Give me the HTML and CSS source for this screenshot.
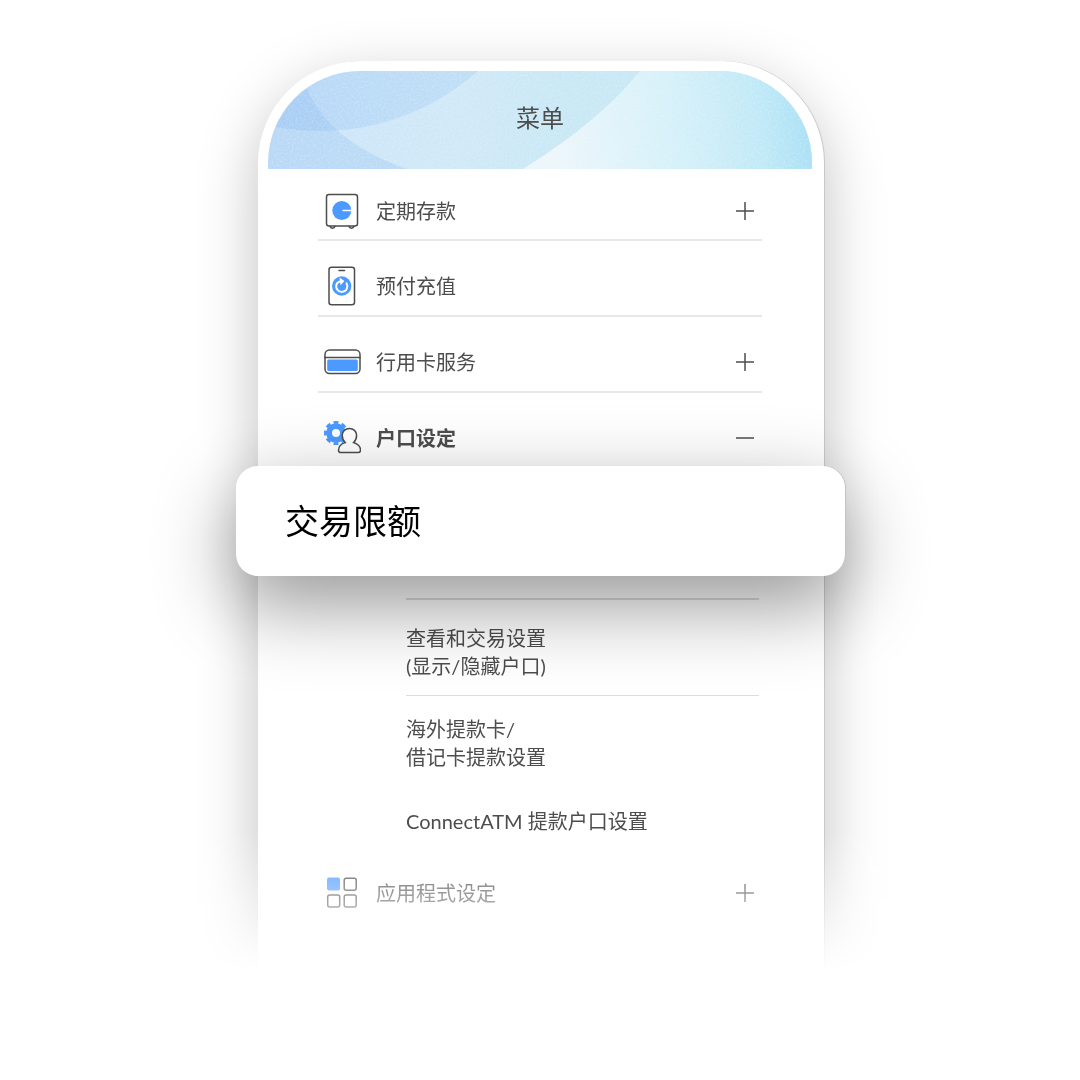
FILE: index.html
```html
<!DOCTYPE html>
<html lang="zh-CN">
<head>
    <meta charset="UTF-8">
    <meta name="viewport" content="width=device-width, initial-scale=1.0">
    <title>菜单</title>
    <link rel="stylesheet" href="styles.css">
</head>
<body>
    <main class="stage">
        <div class="phone">
            <header class="phone-header">
                <svg class="header-art" viewBox="0 0 544 98" preserveAspectRatio="none" aria-hidden="true">
                    <defs>
                        <linearGradient id="base" x1="0" y1="0" x2="1" y2="0">
                            <stop offset="0" stop-color="#cbe4f8"/>
                            <stop offset="0.35" stop-color="#d0e9f8"/>
                            <stop offset="0.55" stop-color="#c8e8f5"/>
                            <stop offset="1" stop-color="#c8e8f5"/>
                        </linearGradient>
                        <linearGradient id="right" gradientUnits="userSpaceOnUse" x1="290" y1="90" x2="544" y2="70">
                            <stop offset="0" stop-color="#ecf6fb"/>
                            <stop offset="0.5" stop-color="#d3f0f9"/>
                            <stop offset="0.8" stop-color="#c0e9f7"/>
                            <stop offset="1" stop-color="#a9e0f5"/>
                        </linearGradient>
                        <linearGradient id="top" x1="0" y1="0" x2="1" y2="0">
                            <stop offset="0.3" stop-color="#6fa8f0" stop-opacity="0.24"/>
                            <stop offset="1" stop-color="#6fb0f0" stop-opacity="0.16"/>
                        </linearGradient>
                        <filter id="grain" x="0" y="0" width="100%" height="100%">
                            <feTurbulence type="fractalNoise" baseFrequency="0.5" numOctaves="2"/>
                            <feColorMatrix type="matrix" values="0 0 0 0 1  0 0 0 0 1  0 0 0 0 1  1.6 0 0 0 -0.6"/>
                        </filter>
                    </defs>
                    <rect width="544" height="98" fill="url(#base)"/>
                    <path d="M0 0H34Q48 66 139 98H0Z" fill="#6fa8f0" fill-opacity="0.2"/>
                    <circle cx="52" cy="-178" r="238" fill="url(#top)"/>
                    <path d="M372 0Q332 50 255 98H544V0Z" fill="url(#right)"/>
                    <rect width="544" height="98" filter="url(#grain)" opacity="0.3"/>
                </svg>
                <h1 class="title">菜单</h1>
            </header>

            <nav class="menu">
                <button type="button" class="row first" aria-expanded="false">
                    <svg class="icon" viewBox="0 0 38 40" aria-hidden="true">
                        <path class="line" d="M7 35.3a2.6 2.6 0 0 0 5 0M26 35.3a2.6 2.6 0 0 0 5 0"/>
                        <rect class="line" x="3.5" y="3.5" width="31" height="31.5" rx="2.5"/>
                        <circle class="fill" cx="18.8" cy="19.5" r="9.5"/>
                        <path class="cut" d="M19.5 19.5H29"/>
                    </svg>
                    <span class="label">定期存款</span>
                    <svg class="toggle" viewBox="0 0 18 18" aria-hidden="true"><path d="M0 9H18M9 0V18"/></svg>
                </button>

                <button type="button" class="row">
                    <svg class="icon" viewBox="0 0 38 40" aria-hidden="true">
                        <rect class="line" x="6" y="1.2" width="25.5" height="37.6" rx="2.5"/>
                        <path class="line" d="M16 4.5H21.5"/>
                        <circle class="fill" cx="18.7" cy="20" r="9.7"/>
                        <path class="cut wide" d="M23.6 17.4A5.6 5.6 0 1 1 13.6 18.2Q14.6 15.6 18 15.2"/>
                        <path class="white" d="M16.4 11.4L21.4 14.9L17.6 19.2Z"/>
                    </svg>
                    <span class="label">预付充值</span>
                </button>

                <button type="button" class="row" aria-expanded="false">
                    <svg class="icon" viewBox="0 0 38 40" aria-hidden="true">
                        <rect class="line" x="2" y="8" width="35" height="23.5" rx="4.5"/>
                        <path class="line" d="M2 15.5H37"/>
                        <rect class="fill" x="4.2" y="17.6" width="30.6" height="11.4" rx="1.5"/>
                    </svg>
                    <span class="label">行用卡服务</span>
                    <svg class="toggle" viewBox="0 0 18 18" aria-hidden="true"><path d="M0 9H18M9 0V18"/></svg>
                </button>

                <button type="button" class="row open" aria-expanded="true">
                    <svg class="icon" viewBox="0 0 38 40" aria-hidden="true">
                        <circle class="gear-body" cx="13" cy="15" r="6.9"/>
                        <circle class="gear-teeth" cx="13" cy="15" r="10.6" pathLength="16"/>
                        <path class="person" d="M22.2 24.6C17.5 26 15.5 28.5 15.5 32.2Q15.5 34.6 18 34.6H35Q37.5 34.6 37.5 32.2C37.5 28.5 35.3 26 30.6 24.6C32.8 22.4 33.6 19.8 33.6 17.2C33.6 13.2 30.4 10.6 26.4 10.6C22.4 10.6 19.2 13.2 19.2 17.2C19.2 19.8 20 22.4 22.2 24.6Z"/>
                    </svg>
                    <span class="label">户口设定</span>
                    <svg class="toggle" viewBox="0 0 18 18" aria-hidden="true"><path d="M0 9H18"/></svg>
                </button>

                <!-- Submenu of 户口设定 -->
                <a href="#limit" class="highlight">交易限额</a>
                <ul class="submenu">
                    <li><a href="#view">查看和交易设置<br>(显示/隐藏户口)</a></li>
                    <li><a href="#overseas">海外提款卡/<br>借记卡提款设置</a></li>
                    <li class="plain"><a href="#connectatm">ConnectATM 提款户口设置</a></li>
                </ul>

                <button type="button" class="row last" aria-expanded="false">
                    <svg class="icon" viewBox="0 0 38 40" aria-hidden="true">
                        <rect class="fill" x="4" y="4.5" width="13" height="13" rx="2"/>
                        <rect class="line" x="21.2" y="5.2" width="12" height="12" rx="2"/>
                        <rect class="line" x="4.7" y="22" width="12" height="12" rx="2"/>
                        <rect class="line" x="21.2" y="22" width="12" height="12" rx="2"/>
                    </svg>
                    <span class="label">应用程式设定</span>
                    <svg class="toggle" viewBox="0 0 18 18" aria-hidden="true"><path d="M0 9H18M9 0V18"/></svg>
                </button>
            </nav>
        </div>
    </main>
</body>
</html>
```
FILE: styles.css
```css
* {
    box-sizing: border-box;
}

body {
    margin: 0;
    background: #fff;
    color: #4d4d4d;
    font-family: Lato, "Noto Sans CJK SC", sans-serif;
    font-size: 20px;
    line-height: 28px;
}

/* everything fades out towards the bottom */
.stage {
    min-height: 100vh;
    padding: 61px 0 0 2px;
    -webkit-mask-image: linear-gradient(#000 77%, transparent 90%);
    mask-image: linear-gradient(#000 77%, transparent 90%);
}

.phone {
    width: 52.5%;
    min-width: 440px;
    margin: 0 auto;
    padding: 10px 12px 50px 10px;
    background: #fff;
    border-radius: 102px 102px 0 0;
    box-shadow: 1px 0 0 #c8c8c8, 0 20px 60px rgba(0, 0, 0, 0.25);
}

.phone-header {
    position: relative;
    overflow: hidden;
    padding: 29px 0 33px;
    border-radius: 92px 92px 0 0;
}

.header-art {
    position: absolute;
    inset: 0;
    width: 100%;
    height: 100%;
}

.title {
    position: relative;
    margin: 0;
    font-size: 24px;
    font-weight: 400;
    line-height: 36px;
    text-align: center;
}

.menu {
    padding: 0 50px;
}

.row {
    display: flex;
    align-items: center;
    width: 100%;
    padding: 25px 8px 9px 5px;
    border: none;
    border-bottom: 2px solid #e8e8e8;
    background: none;
    color: inherit;
    font: inherit;
    text-align: left;
    cursor: pointer;
}

.row.first {
    padding-top: 22px;
    padding-bottom: 8px;
}

.row.open {
    padding-bottom: 8px;
    border-bottom: none;
    font-weight: 700;
}

.row.last {
    border-bottom: none;
}

.icon {
    width: 38px;
    height: 40px;
    margin-right: 15px;
}

.label {
    flex: 1;
}

.toggle {
    width: 18px;
    height: 18px;
    fill: none;
    stroke: #4d4d4d;
    stroke-width: 1.5;
}

.line {
    fill: none;
    stroke: #4d4d4d;
    stroke-width: 1.5;
    stroke-linecap: round;
}

.fill {
    fill: #4c9aff;
}

.white {
    fill: #fff;
}

.cut {
    fill: none;
    stroke: #fff;
    stroke-width: 1.5;
}

.cut.wide {
    stroke-width: 2;
    stroke-linecap: round;
}

.gear-body {
    fill: #fff;
    stroke: #4c9aff;
    stroke-width: 5.8;
}

.gear-teeth {
    fill: none;
    stroke: #4c9aff;
    stroke-width: 2.8;
    stroke-dasharray: 1.2 0.8;
    stroke-dashoffset: 0.6;
}

.person {
    fill: #fff;
    stroke: #4d4d4d;
    stroke-width: 1.5;
}

.highlight {
    display: block;
    position: relative;
    margin: 0 -83px 0 -82px;
    padding: 30px 49px;
    border-radius: 22px;
    background: #fff;
    box-shadow: 1px 0 0 #c4c4c4, 0 28px 80px rgba(0, 0, 0, 0.42);
    color: #000;
    font-size: 34px;
    line-height: 50px;
    text-decoration: none;
}

.submenu {
    margin: 22px 3px 0 88px;
    padding: 0;
    list-style: none;
}

.submenu li {
    padding: 19px 0 15px;
    border-top: 1px solid #dcdcdc;
}

.submenu li:first-child {
    padding-top: 24px;
    border-top: 2px solid #dcdcdc;
}

.submenu li.plain {
    padding: 21px 0 13px;
    border-top: none;
}

.submenu a {
    color: inherit;
    text-decoration: none;
}
```
